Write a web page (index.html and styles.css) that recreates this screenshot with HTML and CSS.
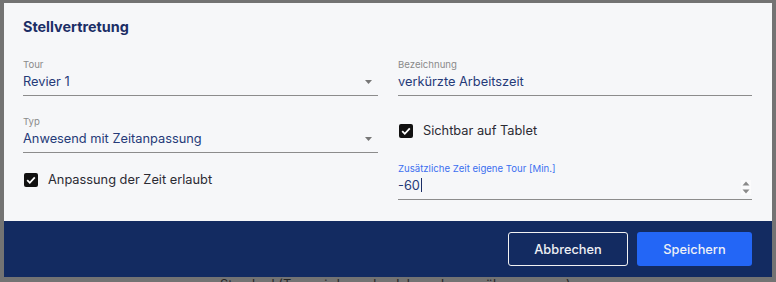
FILE: index.html
```html
<!DOCTYPE html>
<html lang="de">
  <head>
    <meta charset="UTF-8" />
    <meta name="viewport" content="width=device-width, initial-scale=1.0" />
    <title>Stellvertretung</title>
    <link rel="stylesheet" href="styles.css">
  </head>
  <body>
    <div class="dialog">
      <div class="dialog-body">
        <h2 class="dialog-title">Stellvertretung</h2>

        <div class="form-columns">
          <div class="form-col">
            <div class="field">
              <label class="field-label">Tour</label>
              <div class="field-input">
                <span>Revier 1</span>
                <svg class="select-arrow" width="7" height="4" viewBox="0 0 7 4"><path d="M0 0h7L3.5 4z" fill="#777" /></svg>
              </div>
            </div>

            <div class="field gap-typ">
              <label class="field-label">Typ</label>
              <div class="field-input">
                <span>Anwesend mit Zeitanpassung</span>
                <svg class="select-arrow" width="7" height="4" viewBox="0 0 7 4"><path d="M0 0h7L3.5 4z" fill="#777" /></svg>
              </div>
            </div>

            <div class="check-row gap-check-left">
              <svg class="check-box" width="14" height="14" viewBox="0 0 14 14">
                <rect width="14" height="14" rx="2" fill="#111" />
                <path d="M3.2 7.2l2.6 2.6 5-5.4" fill="none" stroke="#fff" stroke-width="1.8" />
              </svg>
              <span>Anpassung der Zeit erlaubt</span>
            </div>
          </div>

          <div class="form-col">
            <div class="field">
              <label class="field-label">Bezeichnung</label>
              <div class="field-input">
                <span>verkürzte Arbeitszeit</span>
              </div>
            </div>

            <div class="check-row gap-check-right">
              <svg class="check-box" width="14" height="14" viewBox="0 0 14 14">
                <rect width="14" height="14" rx="2" fill="#111" />
                <path d="M3.2 7.2l2.6 2.6 5-5.4" fill="none" stroke="#fff" stroke-width="1.8" />
              </svg>
              <span>Sichtbar auf Tablet</span>
            </div>

            <div class="field gap-extra">
              <label class="field-label focused">Zusätzliche Zeit eigene Tour [Min.]</label>
              <div class="field-input">
                <span>-60<span class="caret"></span></span>
                <svg class="spinner" width="10" height="15" viewBox="0 0 10 15">
                  <rect width="10" height="15" fill="#fbfbfc" />
                  <path d="M1.5 5.5L5 1.5l3.5 4z" fill="#8a8a8a" />
                  <path d="M1.5 9.5h7L5 13.5z" fill="#8a8a8a" />
                </svg>
              </div>
            </div>
          </div>
        </div>
      </div>

      <div class="dialog-footer">
        <button class="btn btn-outline" type="button">Abbrechen</button>
        <button class="btn btn-primary" type="button">Speichern</button>
      </div>
    </div>

    <div class="page-behind">Standard (Tour wird aus der Jahresplanung übernommen)</div>
  </body>
</html>
```

FILE: styles.css
```css
* {
  box-sizing: border-box;
  margin: 0;
  padding: 0;
  font-family: Inter, "Noto Sans", sans-serif;
}

body {
  background-color: #737373;
  height: 282px;
  overflow: hidden;
}

.dialog {
  margin: 3px 4px 0 4px;
  background-color: #f6f7f9;
}

.dialog-body {
  padding: 14px 20px 21px 19px;
}

.dialog-title {
  font-size: 14.4px;
  line-height: 20px;
  font-weight: 700;
  color: #1b2e66;
  margin-bottom: 21px;
}

.form-columns {
  display: grid;
  grid-template-columns: 355px 354px;
  gap: 20px;
}

.form-col {
  display: flex;
  flex-direction: column;
}

.field-label {
  display: block;
  font-size: 9.6px;
  line-height: 13px;
  color: #8a8a8a;
  margin-bottom: 1px;
}

.field-label.focused {
  color: #3c6ff0;
}

.field-input {
  display: flex;
  align-items: center;
  justify-content: space-between;
  font-size: 12.8px;
  line-height: 20px;
  color: #253a78;
  padding-bottom: 3px;
  border-bottom: 1px solid #8c8c8c;
}

.select-arrow {
  margin-right: 6px;
}

.spinner {
  margin-right: 1px;
  margin-top: 2px;
}

.caret {
  display: inline-block;
  width: 1px;
  height: 14px;
  background-color: #1b2e66;
  vertical-align: -2px;
  margin-left: 1px;
}

.check-row {
  display: flex;
  align-items: center;
  gap: 10px;
  font-size: 12.8px;
  line-height: 20px;
  color: #2b2b33;
  padding-left: 1px;
}

.gap-typ {
  margin-top: 19px;
}

.gap-check-left {
  margin-top: 17px;
}

.gap-check-right {
  margin-top: 25px;
}

.gap-extra {
  margin-top: 21px;
}

.dialog-footer {
  display: flex;
  justify-content: flex-end;
  gap: 9px;
  background-color: #132b61;
  padding: 11px 20px 11px 0;
}

.btn {
  height: 34px;
  border-radius: 3px;
  font-size: 12.8px;
  font-weight: 500;
  color: #eef0f5;
  cursor: pointer;
}

.btn-outline {
  width: 120px;
  background-color: transparent;
  border: 1px solid #f2f2f2;
}

.btn-primary {
  width: 115px;
  background-color: #2366f6;
  border: none;
}

.page-behind {
  margin-top: 2px;
  padding-left: 220px;
  font-size: 12.8px;
  line-height: 12px;
  color: #262626;
}
```
